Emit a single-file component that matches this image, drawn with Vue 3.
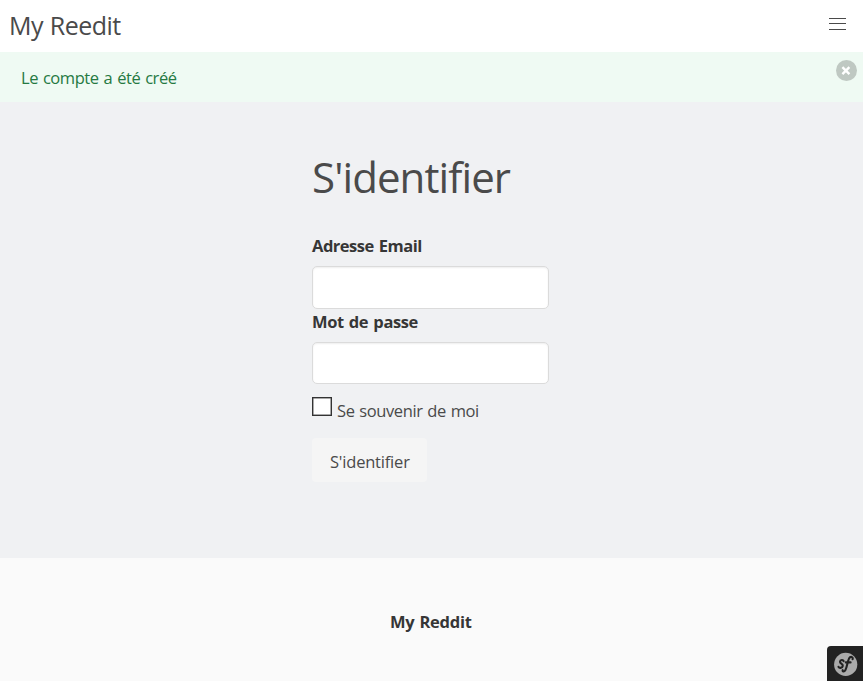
<script setup>
import { ref } from 'vue'

const email = ref('')
const password = ref('')
const remember = ref(false)
</script>

<template>
  <div class="page">
    <header class="navbar">
      <a class="brand">My Reedit</a>
      <svg class="burger" viewBox="0 0 17 12" aria-hidden="true">
        <path d="M0 .5H17M0 5.5H17M0 11.5H17" />
      </svg>
    </header>
    <div class="notification">
      <span>Le compte a été créé</span>
      <svg class="delete" viewBox="0 0 21 21" aria-hidden="true">
        <circle cx="10.5" cy="10.5" r="10.5" />
        <path d="M6.4 7.2L13.4 14.2M13.4 7.2L6.4 14.2" />
      </svg>
    </div>
    <main class="section">
      <form class="form" @submit.prevent>
        <h1 class="title">S'identifier</h1>
        <label class="label" for="email">Adresse Email</label>
        <input id="email" v-model="email" class="input first" type="email" />
        <label class="label second" for="password">Mot de passe</label>
        <input id="password" v-model="password" class="input" type="password" />
        <label class="remember">
          <input v-model="remember" type="checkbox" class="check" />
          <span>Se souvenir de moi</span>
        </label>
        <button class="button" type="submit">S'identifier</button>
      </form>
    </main>
    <footer class="footer"><strong>My Reddit</strong></footer>
    <div class="toolbar">
      <svg viewBox="0 0 24 24" aria-hidden="true">
        <circle cx="11.7" cy="12.4" r="11.6" />
        <path class="s" d="M9.6 9.3C9.6 7.4 6.1 7.7 6 9.7C5.9 11.6 9.1 11.7 8.8 13.9C8.5 16.3 4.6 16.5 4.5 14.7" />
        <path class="f" d="M18.6 7.2C19.4 4.6 16.4 4 15 6.6C13.4 9.8 13 15.4 11.3 18.3C10.3 20 8.2 19.7 8.7 18.2M11.8 10.4H16.6" />
      </svg>
    </div>
  </div>
</template>

<style>
body {
  margin: 0;
  overflow: hidden;
}
</style>

<style scoped>
.page {
  position: relative;
  display: flex;
  flex-direction: column;
  height: 681px;
  overflow: hidden;
  color: #4a4a4a;
  font: 16.5px/24px "Open Sans", "Noto Sans", sans-serif;
}
.page * {
  box-sizing: border-box;
}
.navbar {
  display: flex;
  justify-content: space-between;
  height: 52px;
  padding: 0 17px 0 9px;
  background: #fff;
}
.brand {
  font-size: 25px;
  line-height: 50px;
  letter-spacing: -0.5px;
  word-spacing: 0.7px;
}
.burger {
  width: 17px;
  height: 12px;
  margin-top: 18px;
  fill: none;
  stroke: #4a4a4a;
}
.notification {
  position: relative;
  height: 50px;
  padding: 14px 21px;
  background: #effaf3;
  color: #257942;
  letter-spacing: -0.45px;
  word-spacing: 1.1px;
}
.delete {
  position: absolute;
  top: 8px;
  right: 6px;
  width: 21px;
  height: 21px;
  fill: #bfc8c2;
  stroke: #fff;
  stroke-width: 2.4;
}
.delete circle {
  stroke: none;
}
.section {
  height: 456px;
  padding: 50px 0 0 312px;
  background: #f0f1f3;
}
.form {
  display: flex;
  flex-direction: column;
  align-items: flex-start;
  width: 237px;
}
.title {
  margin: 0;
  height: 82px;
  font-size: 42px;
  font-weight: 400;
  line-height: 50px;
  letter-spacing: -0.9px;
  white-space: nowrap;
}
.label {
  height: 32px;
  color: #363636;
  font-weight: 700;
  letter-spacing: -0.5px;
  word-spacing: 1.3px;
  white-space: nowrap;
}
.label.second {
  height: 33px;
  padding-top: 1px;
  letter-spacing: -0.42px;
}
.input {
  width: 237px;
  height: 42px;
  padding: 0 12px;
  border: 1px solid #dbdbdb;
  border-radius: 5px;
  outline: none;
  background: #fff;
  box-shadow: inset 0 1px 2px rgba(10, 10, 10, 0.07);
}
.input.first {
  height: 43px;
}
.remember {
  display: flex;
  gap: 5px;
  height: 54px;
  padding-top: 13px;
  letter-spacing: -0.4px;
  word-spacing: 0.9px;
  white-space: nowrap;
}
.remember span {
  margin-top: 2px;
}
.check {
  appearance: none;
  width: 20px;
  height: 19px;
  margin: 0;
  border: 1px solid #333;
  background: #fff;
  box-shadow: inset 0 0 0 0.5px #555;
}
.button {
  width: 115px;
  height: 44px;
  padding: 3px 0 0 18px;
  border: 0;
  border-radius: 4px;
  background: #f5f5f5;
  color: #4a4a4a;
  font: inherit;
  letter-spacing: -0.2px;
  text-align: left;
  white-space: nowrap;
}
.footer {
  height: 123px;
  padding: 52px 0 0 390px;
  background: #fafafa;
  color: #363636;
  letter-spacing: -0.25px;
  word-spacing: 1px;
}
.toolbar {
  position: absolute;
  right: 0;
  bottom: 0;
  width: 36px;
  height: 35px;
  padding: 6px 5px 5px 7px;
  border-top-left-radius: 4px;
  background: #222;
}
.toolbar svg {
  display: block;
  width: 24px;
  height: 24px;
  fill: none;
  stroke: #222;
  stroke-linecap: round;
}
.toolbar circle {
  fill: #aaa;
  stroke: none;
}
.s {
  stroke-width: 2.1;
}
.f {
  stroke-width: 2.1;
}
</style>
